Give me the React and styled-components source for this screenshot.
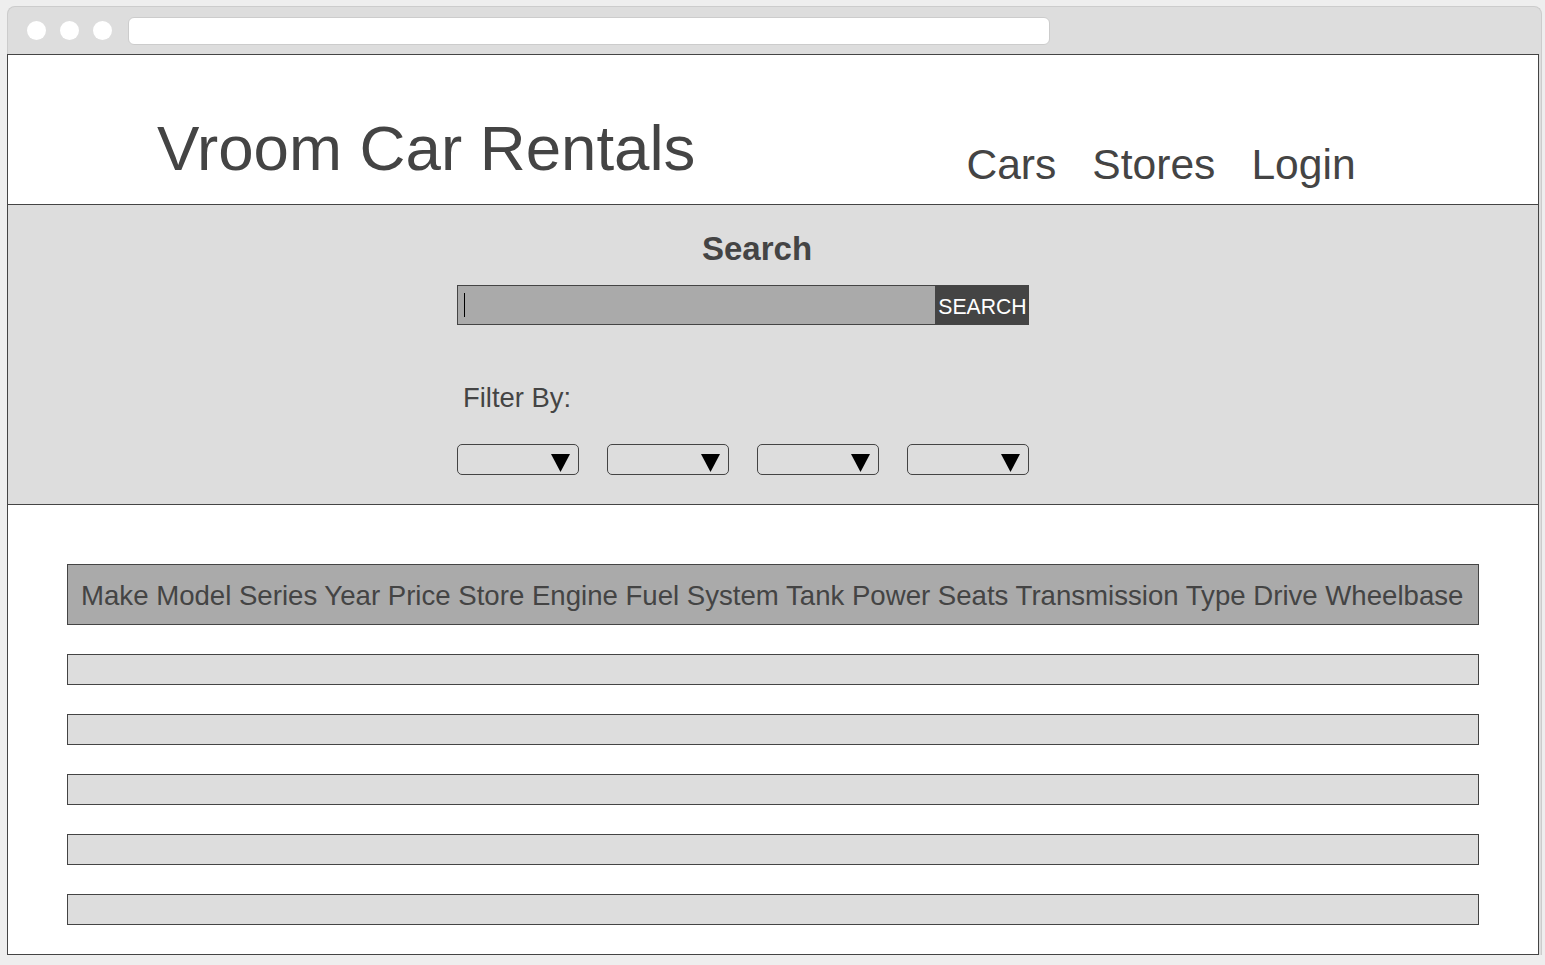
import React from 'react';
import styled, { createGlobalStyle } from 'styled-components';

const GlobalStyle = createGlobalStyle`
  body {
    margin: 0;
    background: #eeeeee;
    font-family: "Liberation Sans", Arial, sans-serif;
    color: #444444;
  }
`;

const Frame = styled.div`
  margin: 6px 0 0 7px;
  width: 1535px;
  box-sizing: border-box;
  border: 1px solid #cccccc;
  border-bottom: none;
  border-radius: 8px 8px 0 0;
  background: #dddddd;
`;

const TopBar = styled.div`
  height: 47px;
  display: flex;
  align-items: center;
  padding-left: 19px;
`;

const Dot = styled.div`
  width: 19px;
  height: 19px;
  border-radius: 50%;
  background: #ffffff;
  margin-right: 14px;
`;

const UrlBar = styled.div`
  margin-left: 2px;
  width: 922px;
  height: 28px;
  margin-top: 1px;
  background: #ffffff;
  border: 1px solid #cccccc;
  border-radius: 6px;
  box-sizing: border-box;
`;

const Content = styled.div`
  margin-left: -1px;
  width: 1532px;
  box-sizing: border-box;
  border: 1px solid #444444;
  background: #ffffff;
`;

const Header = styled.header`
  height: 150px;
  box-sizing: border-box;
  border-bottom: 1px solid #444444;
  display: flex;
  align-items: flex-start;
  padding-left: 149px;
`;

const Title = styled.h1`
  margin: 61px 0 0 0;
  font-size: 63.6px;
  line-height: 64px;
  font-weight: normal;
`;

const Nav = styled.nav`
  display: flex;
  gap: 36px;
  margin: 88px 0 0 271px;
`;

const NavLink = styled.a`
  font-size: 42.6px;
  line-height: 42px;
  color: #444444;
  text-decoration: none;
`;

const SearchSection = styled.section`
  background: #dddddd;
  border-bottom: 1px solid #444444;
  padding: 28px 0 29px 449px;
`;

const SearchTitle = styled.h2`
  margin: 0 0 0 245px;
  font-size: 33px;
  line-height: 32px;
  font-weight: bold;
`;

const SearchRow = styled.div`
  display: flex;
  margin-top: 20px;
  height: 40px;
`;

const SearchInput = styled.div`
  width: 479px;
  box-sizing: border-box;
  border: 1px solid #444444;
  background: #aaaaaa;
  display: flex;
  align-items: center;
  padding-left: 6px;
`;

const Caret = styled.span`
  width: 1px;
  height: 24px;
  background: #000000;
`;

const SearchButton = styled.button`
  width: 93px;
  margin: 0;
  padding: 4px 0 0;
  border: none;
  background: #444444;
  color: #ffffff;
  font-family: "Liberation Sans", Arial, sans-serif;
  font-size: 21.2px;
  line-height: 36px;
`;

const FilterLabel = styled.div`
  margin: 59px 0 0 6px;
  font-size: 27.4px;
  line-height: 27px;
  padding-bottom: 1px;
`;

const FilterRow = styled.div`
  display: flex;
  gap: 28px;
  margin-top: 32px;
`;

const Select = styled.div`
  width: 122px;
  height: 31px;
  box-sizing: border-box;
  border: 1px solid #444444;
  border-radius: 5px;
  display: flex;
  justify-content: flex-end;
  align-items: flex-end;
  padding: 0 8px 2px 0;
`;

const TableArea = styled.div`
  padding: 59px 59px 29px 59px;
  display: flex;
  flex-direction: column;
  gap: 29px;
`;

const HeadRow = styled.div`
  height: 61px;
  box-sizing: border-box;
  border: 1px solid #444444;
  background: #aaaaaa;
  display: flex;
  align-items: center;
  padding: 2px 0 0 13px;
  font-size: 27.6px;
  white-space: nowrap;
`;

const Row = styled.div`
  height: 31px;
  box-sizing: border-box;
  border: 1px solid #444444;
  background: #dddddd;
`;

const columns = ['Make', 'Model', 'Series', 'Year', 'Price', 'Store', 'Engine', 'Fuel System', 'Tank', 'Power', 'Seats', 'Transmission Type', 'Drive', 'Wheelbase'];

const Arrow = () => (
  <svg width="19" height="18" viewBox="0 0 19 18">
    <polygon points="0,0 19,0 9.5,18" fill="#000" />
  </svg>
);

const App = () => {
  return (
    <>
      <GlobalStyle />
      <Frame>
        <TopBar>
          <Dot />
          <Dot />
          <Dot />
          <UrlBar />
        </TopBar>
        <Content>
          <Header>
            <Title>Vroom Car Rentals</Title>
            <Nav>
              <NavLink>Cars</NavLink>
              <NavLink>Stores</NavLink>
              <NavLink>Login</NavLink>
            </Nav>
          </Header>
          <SearchSection>
            <SearchTitle>Search</SearchTitle>
            <SearchRow>
              <SearchInput>
                <Caret />
              </SearchInput>
              <SearchButton>SEARCH</SearchButton>
            </SearchRow>
            <FilterLabel>Filter By:</FilterLabel>
            <FilterRow>
              {[0, 1, 2, 3].map((i) => (
                <Select key={i}>
                  <Arrow />
                </Select>
              ))}
            </FilterRow>
          </SearchSection>
          <TableArea>
            <HeadRow>{columns.join(' ')}</HeadRow>
            {[0, 1, 2, 3, 4].map((i) => (
              <Row key={i} />
            ))}
          </TableArea>
        </Content>
      </Frame>
    </>
  );
};

export default App;
